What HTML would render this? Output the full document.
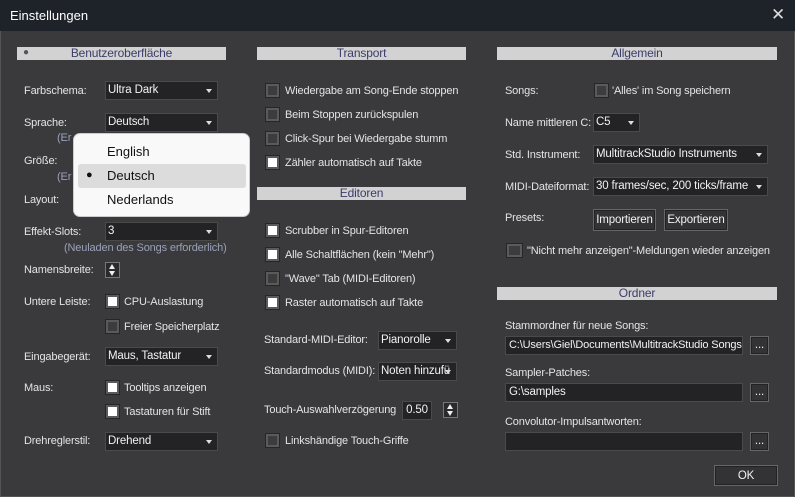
<!DOCTYPE html>
<html><head><meta charset="utf-8"><style>
*{box-sizing:border-box;margin:0;padding:0}
body{width:795px;height:497px;background:#3a3a3c;font-family:"Liberation Sans",sans-serif;font-size:11px;letter-spacing:-0.15px;color:#e4e4e4;position:relative;overflow:hidden}
.tb{position:absolute;left:0;top:0;width:795px;height:31px;background:#1d2329;color:#fff;font-size:13px;letter-spacing:0}
.tb .t{position:absolute;left:10px;top:8px}
.tb .x{position:absolute;left:771px;top:5px;font-size:17px;color:#ddd}
.frame{position:absolute;left:0;top:31px;width:795px;height:466px;border:1px solid #555;border-top:none}
.a{position:absolute;white-space:nowrap;line-height:14px}
.hd{position:absolute;height:13px;background:#d2d2d2;color:#3a3c6a;text-align:center;font-size:12px;line-height:13px}
.dd{position:absolute;height:19px;background:#232325;border:1px solid #4a4a4a;padding-left:2px;padding-right:14px;line-height:17px;color:#f2f2f2;white-space:nowrap;overflow:hidden;font-size:11.5px}
.dd:after{content:"";position:absolute;right:5px;top:7px;border-left:3.5px solid transparent;border-right:3.5px solid transparent;border-top:4px solid #ddd}
.cb{position:absolute;width:15px;height:15px;border:1px solid #262626;background:#5a5a5a;padding:2px}
.cb i{display:block;width:9px;height:9px;background:#3c3c3c}
.cb.on i{background:#fff}
.in{position:absolute;height:19px;background:#232325;border:1px solid #4a4a4a;padding-left:3px;line-height:17px;white-space:nowrap;overflow:hidden;color:#f2f2f2;font-size:11.5px}
.bt{position:absolute;height:20px;background:#333335;border:1px solid #222;outline:1px solid #666;text-align:center;line-height:18px;color:#f2f2f2;font-size:11.5px}
.note{color:#9aa0b8}
.pop{position:absolute;left:73px;top:133px;width:177px;height:84px;background:#f9f9f9;border:1px solid #ccc;border-radius:7px;color:#111;font-size:13px;letter-spacing:0}
.pop .it{position:absolute;left:33px}
.hl{position:absolute;left:4px;top:30px;width:168px;height:24px;background:#dcdcdc;border-radius:3px}
.sp{position:absolute;width:15px;height:16px;background:#2a2a2a;border:1px solid #777}
.sp:before{content:"";position:absolute;left:3px;top:1px;border-left:3.5px solid transparent;border-right:3.5px solid transparent;border-bottom:5px solid #eee}
.sp:after{content:"";position:absolute;left:3px;top:8px;border-left:3.5px solid transparent;border-right:3.5px solid transparent;border-top:5px solid #eee}
</style></head><body>
<div class="tb"><span class="t">Einstellungen</span><span class="x">✕</span></div>
<div class="frame"></div>

<div class="hd" style="left:17px;top:47px;width:209px">Benutzeroberfläche</div>
<div class="a" style="left:23px;top:46px;color:#555;font-size:10px">●</div>
<div class="hd" style="left:257px;top:47px;width:209px">Transport</div>
<div class="hd" style="left:497px;top:47px;width:280px">Allgemein</div>
<div class="hd" style="left:257px;top:187px;width:209px">Editoren</div>
<div class="hd" style="left:497px;top:287px;width:280px">Ordner</div>

<!-- left -->
<div class="a" style="left:24px;top:84px">Farbschema:</div><div class="dd" style="left:105px;top:81px;width:113px">Ultra Dark</div>
<div class="a" style="left:24px;top:116px">Sprache:</div><div class="dd" style="left:105px;top:113px;width:113px">Deutsch</div>
<div class="a note" style="left:57px;top:131px">(Er</div>
<div class="a" style="left:24px;top:154px">Größe:</div>
<div class="a note" style="left:57px;top:170px">(Er</div>
<div class="a" style="left:24px;top:193px">Layout:</div>
<div class="a" style="left:24px;top:225px">Effekt-Slots:</div><div class="dd" style="left:105px;top:222px;width:113px">3</div>
<div class="a note" style="left:64px;top:241px">(Neuladen des Songs erforderlich)</div>
<div class="a" style="left:24px;top:263px">Namensbreite:</div><div class="sp" style="left:105px;top:262px"></div>
<div class="a" style="left:24px;top:295px">Untere Leiste:</div>
<div class="cb on" style="left:105px;top:294px"><i></i></div><div class="a" style="left:124px;top:295px">CPU-Auslastung</div>
<div class="cb" style="left:105px;top:319px"><i></i></div><div class="a" style="left:124px;top:320px">Freier Speicherplatz</div>
<div class="a" style="left:24px;top:350px">Eingabegerät:</div><div class="dd" style="left:105px;top:347px;width:113px">Maus, Tastatur</div>
<div class="a" style="left:24px;top:381px">Maus:</div>
<div class="cb on" style="left:105px;top:380px"><i></i></div><div class="a" style="left:124px;top:381px">Tooltips anzeigen</div>
<div class="cb on" style="left:105px;top:404px"><i></i></div><div class="a" style="left:124px;top:405px">Tastaturen für Stift</div>
<div class="a" style="left:24px;top:434px">Drehreglerstil:</div><div class="dd" style="left:105px;top:432px;width:113px">Drehend</div>

<!-- middle -->
<div class="cb" style="left:265px;top:83px"><i></i></div><div class="a" style="left:285px;top:84px">Wiedergabe am Song-Ende stoppen</div>
<div class="cb" style="left:265px;top:107px"><i></i></div><div class="a" style="left:285px;top:108px">Beim Stoppen zurückspulen</div>
<div class="cb" style="left:265px;top:131px"><i></i></div><div class="a" style="left:285px;top:132px">Click-Spur bei Wiedergabe stumm</div>
<div class="cb on" style="left:265px;top:155px"><i></i></div><div class="a" style="left:285px;top:156px">Zähler automatisch auf Takte</div>
<div class="cb on" style="left:265px;top:223px"><i></i></div><div class="a" style="left:285px;top:224px">Scrubber in Spur-Editoren</div>
<div class="cb on" style="left:265px;top:247px"><i></i></div><div class="a" style="left:285px;top:248px">Alle Schaltflächen (kein "Mehr")</div>
<div class="cb" style="left:265px;top:271px"><i></i></div><div class="a" style="left:285px;top:272px">"Wave" Tab (MIDI-Editoren)</div>
<div class="cb on" style="left:265px;top:295px"><i></i></div><div class="a" style="left:285px;top:296px">Raster automatisch auf Takte</div>
<div class="a" style="left:264px;top:333px">Standard-MIDI-Editor:</div><div class="dd" style="left:378px;top:331px;width:79px">Pianorolle</div>
<div class="a" style="left:264px;top:364px">Standardmodus (MIDI):</div><div class="dd" style="left:378px;top:362px;width:79px">Noten hinzufü</div>
<div class="a" style="left:264px;top:403px">Touch-Auswahlverzögerung</div><div class="in" style="left:402px;top:401px;width:30px;text-align:center;padding:0">0.50</div>
<div class="sp" style="left:443px;top:402px"></div>
<div class="cb" style="left:265px;top:433px"><i></i></div><div class="a" style="left:285px;top:434px">Linkshändige Touch-Griffe</div>

<!-- right -->
<div class="a" style="left:505px;top:84px">Songs:</div>
<div class="cb" style="left:594px;top:83px"><i></i></div><div class="a" style="left:612px;top:84px">'Alles' im Song speichern</div>
<div class="a" style="left:505px;top:116px">Name mittleren C:</div><div class="dd" style="left:593px;top:113px;width:47px">C5</div>
<div class="a" style="left:505px;top:148px">Std. Instrument:</div><div class="dd" style="left:593px;top:145px;width:175px">MultitrackStudio Instruments</div>
<div class="a" style="left:505px;top:180px">MIDI-Dateiformat:</div><div class="dd" style="left:593px;top:177px;width:175px">30 frames/sec, 200 ticks/frame</div>
<div class="a" style="left:505px;top:211px">Presets:</div>
<div class="bt" style="left:594px;top:210px;width:61px">Importieren</div>
<div class="bt" style="left:665px;top:210px;width:62px">Exportieren</div>
<div class="cb" style="left:506px;top:243px;width:17px"><i style="width:11px"></i></div><div class="a" style="left:527px;top:244px">"Nicht mehr anzeigen"-Meldungen wieder anzeigen</div>
<div class="a" style="left:505px;top:319px">Stammordner für neue Songs:</div>
<div class="in" style="left:505px;top:336px;width:238px;font-size:11px">C:\Users\Giel\Documents\MultitrackStudio Songs</div>
<div class="bt" style="left:751px;top:337px;width:17px;height:17px;line-height:14px">...</div>
<div class="a" style="left:505px;top:366px">Sampler-Patches:</div>
<div class="in" style="left:505px;top:383px;width:238px">G:\samples</div>
<div class="bt" style="left:751px;top:384px;width:17px;height:17px;line-height:14px">...</div>
<div class="a" style="left:505px;top:415px">Convolutor-Impulsantworten:</div>
<div class="in" style="left:505px;top:432px;width:238px"></div>
<div class="bt" style="left:751px;top:433px;width:17px;height:17px;line-height:14px">...</div>
<div class="bt" style="left:715px;top:466px;width:62px;height:19px">OK</div>

<div class="pop"><div class="hl"></div>
<div class="it" style="top:10px">English</div>
<div class="a" style="left:12px;top:34px;font-size:11px">●</div>
<div class="it" style="top:34px">Deutsch</div>
<div class="it" style="top:58px">Nederlands</div></div>
</body></html>
